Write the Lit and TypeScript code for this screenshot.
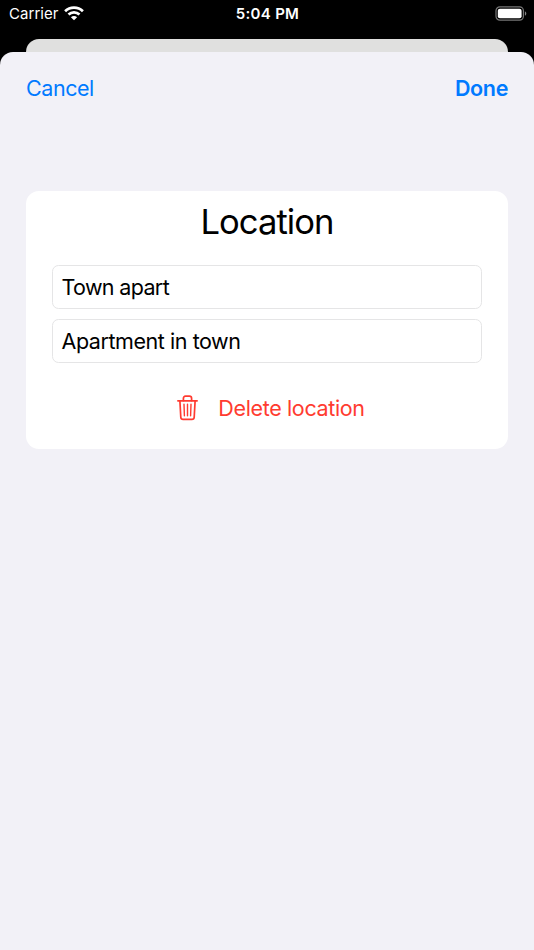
import { LitElement, html, css } from "lit";
import { customElement, property } from "lit/decorators.js";

@customElement("status-bar")
class StatusBar extends LitElement {
  static styles = css`
    :host {
      display: grid;
      grid-template-columns: 1fr auto 1fr;
      align-items: center;
      height: 28px;
      padding: 0 7px 0 9px;
      color: #fff;
      font-size: 15px;
      line-height: 28px;
    }
    .carrier { display: flex; align-items: center; gap: 5px; letter-spacing: 0.05px; }
    .time { font-weight: 600; letter-spacing: 0.3px; margin-left: -1px; }
    .battery { display: flex; justify-content: flex-end; }
    svg { display: block; }
    .wifi { margin-top: -2px; }
    .level { margin-top: -2px; }
  `;
  render() {
    return html`
      <div class="carrier">
        <span>Carrier</span>
        <svg class="wifi" width="20" height="15" viewBox="0 0 20 15" fill="none" stroke="#fff" stroke-width="2.7">
          <path d="M1.1 5.2C6 .4 14 .4 18.9 5.2" />
          <path d="M4.5 8.6C7.6 5.7 12.4 5.7 15.5 8.6" />
          <path d="M10 14.2L6.9 11.2C8.6 9.6 11.4 9.6 13.1 11.2Z" fill="#fff" stroke="none" />
        </svg>
      </div>
      <div class="time">5:04 PM</div>
      <div class="battery">
        <svg class="level" width="32" height="15" viewBox="0 0 32 15">
          <rect x="1" y=".9" width="27.4" height="13.2" rx="3.8" fill="none" stroke="#767676" stroke-width="1.2" />
          <rect x="2.8" y="2.7" width="23.8" height="9.6" rx="2.1" fill="#fff" />
          <path d="M29.9 5.2C31.8 6 31.8 9 29.9 9.8Z" fill="#858585" />
        </svg>
      </div>
    `;
  }
}

@customElement("text-field")
class TextField extends LitElement {
  @property() value = "";
  static styles = css`
    :host {
      display: block;
      box-sizing: border-box;
      height: 44px;
      padding: 0 8.5px;
      border: 1px solid #e5e5e6;
      border-radius: 6.5px;
      background: #fff;
      font-size: 21.5px;
      line-height: 43px;
      white-space: nowrap;
    }
  `;
  render() {
    return html`<span>${this.value}</span>`;
  }
}

@customElement("app-root")
class AppRoot extends LitElement {
  static styles = css`
    :host {
      display: flex;
      flex-direction: column;
      height: 950px;
      background: #000;
      color: #000;
      font-family: Inter, "Liberation Sans", sans-serif;
    }
    .behind {
      height: 13px;
      margin: 11px 26px 0;
      border-radius: 13px 13px 0 0;
      background: #e0e0df;
    }
    .sheet {
      flex: 1;
      border-radius: 13px 13px 0 0;
      background: #f2f1f7;
      padding: 0 26px;
    }
    .nav {
      display: flex;
      justify-content: space-between;
      height: 139px;
      color: #007aff;
      font-size: 21.5px;
      line-height: 73px;
    }
    .cancel { letter-spacing: -0.45px; }
    .done { font-weight: 600; letter-spacing: -0.35px; }
    .card {
      box-sizing: border-box;
      height: 258px;
      padding: 5px 26px 0;
      border-radius: 13px;
      background: #fff;
    }
    h1 {
      margin: 0 0 19px;
      font-size: 34.6px;
      font-weight: 400;
      line-height: 50px;
      letter-spacing: -0.95px;
      text-align: center;
    }
    .fields { display: grid; gap: 10px; }
    .name { letter-spacing: -0.65px; }
    .details { letter-spacing: -0.44px; }
    .delete {
      display: flex;
      justify-content: center;
      align-items: center;
      gap: 20.5px;
      height: 90px;
      padding-left: 7.5px;
      color: #ff3b30;
      font-size: 21.5px;
      letter-spacing: -0.36px;
    }
    .delete svg { display: block; }
  `;
  render() {
    return html`
      <status-bar></status-bar>
      <div class="behind"></div>
      <div class="sheet">
        <div class="nav">
          <span class="cancel">Cancel</span>
          <span class="done">Done</span>
        </div>
        <div class="card">
          <h1>Location</h1>
          <div class="fields">
            <text-field class="name" .value=${"Town apart"}></text-field>
            <text-field class="details" .value=${"Apartment in town"}></text-field>
          </div>
          <div class="delete">
            <svg width="21" height="26" viewBox="0 0 21 26" fill="none" stroke="#ff3b30" stroke-width="1.7" stroke-linecap="round" stroke-linejoin="round">
              <path d="M.9 5.8H20.1" />
              <path d="M6.4 5.6V3.4Q6.4 1.2 8.6 1.2H12.4Q14.6 1.2 14.6 3.4V5.6" />
              <path d="M2.9 6L3.8 22.2Q3.9 24.4 6.1 24.4H14.9Q17.1 24.4 17.2 22.2L18.1 6" />
              <path d="M7 9.2L7.4 20.8M10.5 9.2V20.8M14 9.2L13.6 20.8" stroke-width="1.4" />
            </svg>
            <span>Delete location</span>
          </div>
        </div>
      </div>
    `;
  }
}
